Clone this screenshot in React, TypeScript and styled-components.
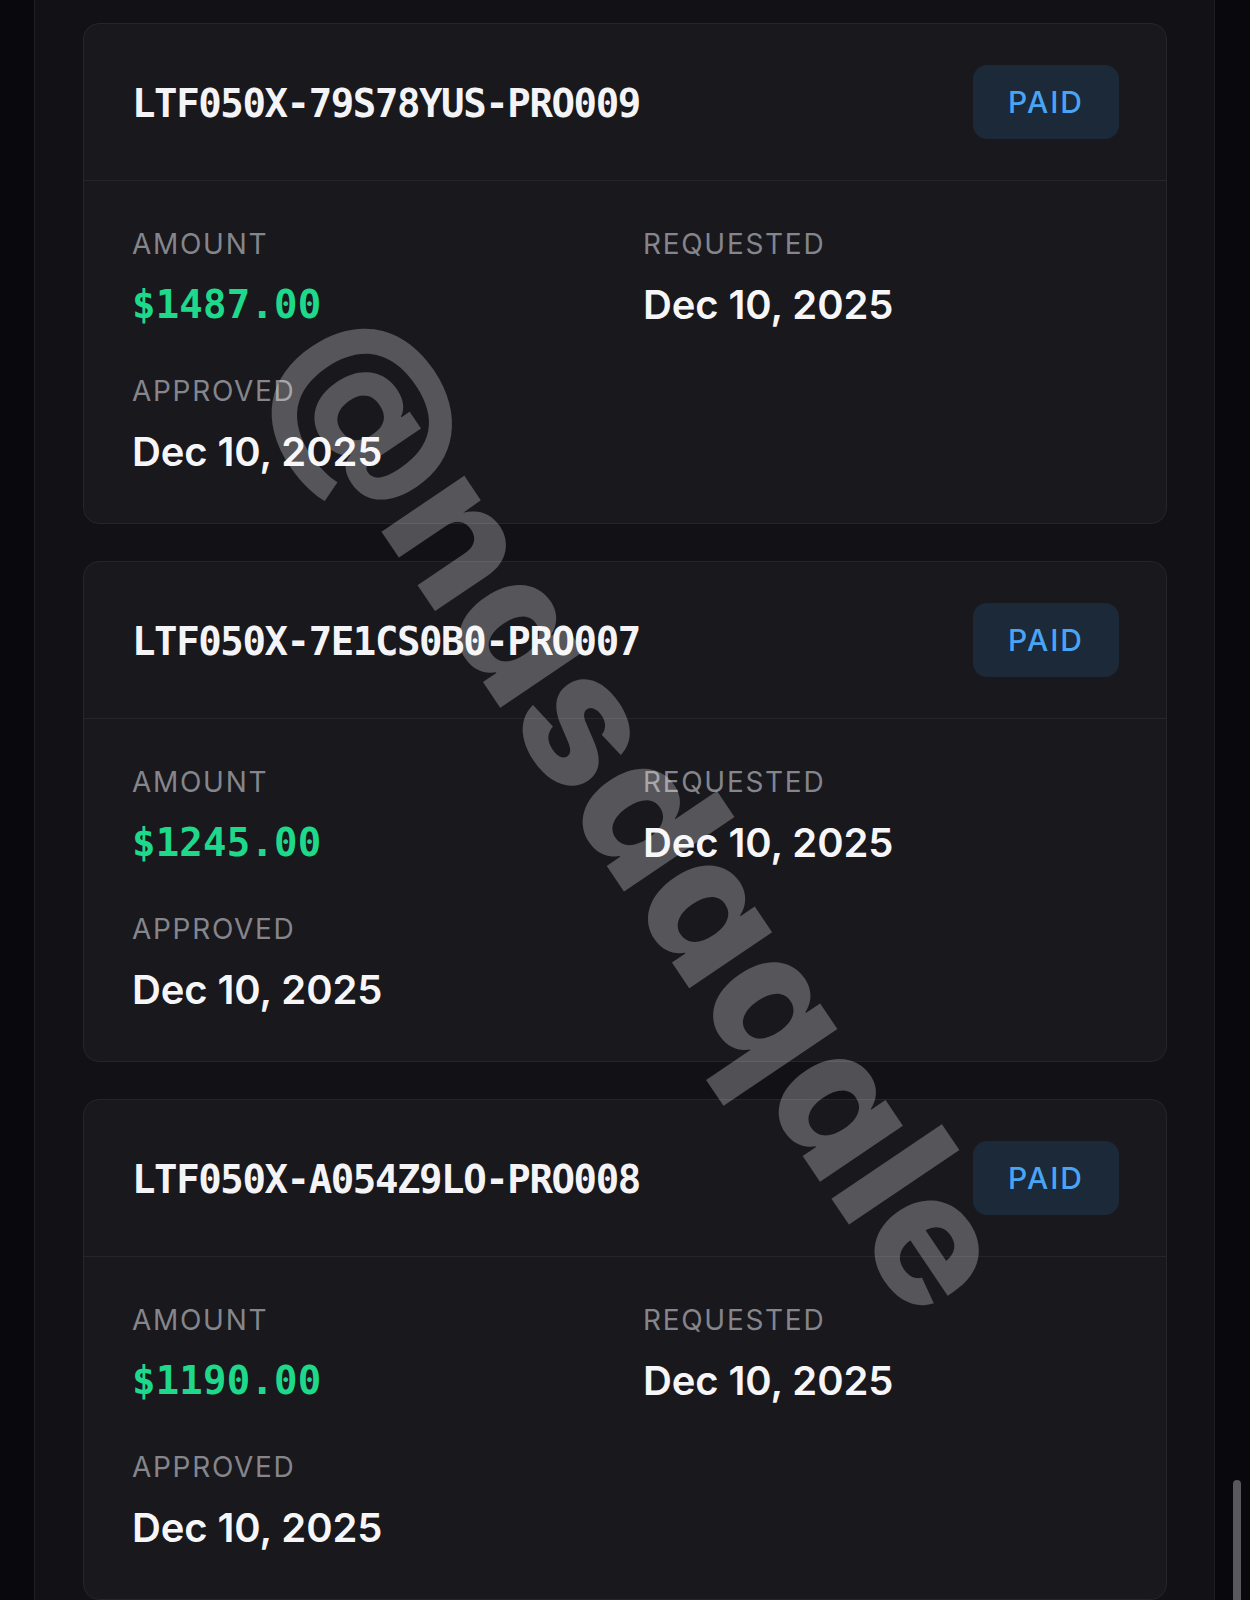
import React from "react";
import styled, { createGlobalStyle } from "styled-components";

const GlobalStyle = createGlobalStyle`
  html, body {
    margin: 0;
    padding: 0;
    background: #09090d;
  }
  * { box-sizing: border-box; }
`;

const Page = styled.div`
  position: relative;
  min-height: 1600px;
  height: 1600px;
  overflow: hidden;
  background: #09090d;
  padding-left: 34px;
  display: flex;
`;

const Panel = styled.div`
  width: 1181px;
  background: #111116;
  border-left: 1px solid #1d1d23;
  border-right: 1px solid #1d1d23;
  padding: 23px 47px 0 48px;
  display: flex;
  flex-direction: column;
  gap: 37px;
`;

const Card = styled.div`
  background: #18181d;
  border: 1px solid #25252b;
  border-radius: 16px;
  overflow: hidden;
`;

const CardHeader = styled.div`
  height: 157px;
  padding: 3px 47px 0 48px;
  display: flex;
  align-items: center;
  justify-content: space-between;
  border-bottom: 1px solid #25252b;
`;

const Title = styled.div`
  font-family: "DejaVu Sans Mono", "Liberation Mono", monospace;
  font-weight: 700;
  font-size: 39px;
  letter-spacing: -1.4px;
  color: #f4f4f6;
  line-height: 48px;
`;

const Badge = styled.div`
  height: 74px;
  width: 146px;
  margin-top: -3px;
  border-radius: 14px;
  background: #1b2939;
  color: #4aa4f4;
  font-family: Inter, "Noto Sans", sans-serif;
  font-weight: 500;
  font-size: 30px;
  letter-spacing: 2px;
  display: flex;
  align-items: center;
  justify-content: center;
`;

const CardBody = styled.div`
  padding: 46px 47px 47px 48px;
  display: grid;
  grid-template-columns: 1fr 1fr;
  column-gap: 35px;
  row-gap: 45px;
`;

const Field = styled.div`
  display: flex;
  flex-direction: column;
  gap: 20px;
`;

const Label = styled.div`
  font-family: Inter, "Noto Sans", sans-serif;
  font-weight: 400;
  font-size: 28px;
  line-height: 34px;
  letter-spacing: 1.7px;
  color: #85858c;
  text-transform: uppercase;
`;

const Value = styled.div<{ $mono?: boolean; $color?: string }>`
  font-family: ${(p) =>
    p.$mono ? `"DejaVu Sans Mono", "Liberation Mono", monospace` : `Inter, "Noto Sans", sans-serif`};
  font-weight: ${(p) => (p.$mono ? 700 : 600)};
  font-size: ${(p) => (p.$mono ? "39px" : "40px")};
  line-height: 48px;
  letter-spacing: ${(p) => (p.$mono ? "0.2px" : "-0.1px")};
  color: ${(p) => p.$color || "#f6f6f8"};
  white-space: nowrap;
`;

const Watermark = styled.div`
  position: absolute;
  left: 648px;
  top: 808px;
  transform: translate(-50%, -50%) rotate(56deg);
  font-family: Inter, "Noto Sans", sans-serif;
  font-feature-settings: "cv11";
  font-weight: 800;
  font-size: 183px;
  line-height: 1;
  color: rgba(255, 255, 255, 0.27);
  white-space: nowrap;
  pointer-events: none;
`;

const ScrollThumb = styled.div`
  position: absolute;
  left: 1233px;
  top: 1480px;
  width: 8px;
  height: 140px;
  border-radius: 4px;
  background: #58585d;
`;

type Payout = {
  id: string;
  amount: string;
  requested: string;
  approved: string;
};

const payouts: Payout[] = [
  { id: "LTF050X-79S78YUS-PRO009", amount: "$1487.00", requested: "Dec 10, 2025", approved: "Dec 10, 2025" },
  { id: "LTF050X-7E1CS0B0-PRO007", amount: "$1245.00", requested: "Dec 10, 2025", approved: "Dec 10, 2025" },
  { id: "LTF050X-A054Z9LO-PRO008", amount: "$1190.00", requested: "Dec 10, 2025", approved: "Dec 10, 2025" },
];

function PayoutCard({ p }: { p: Payout }) {
  return (
    <Card>
      <CardHeader>
        <Title>{p.id}</Title>
        <Badge>PAID</Badge>
      </CardHeader>
      <CardBody>
        <Field>
          <Label>Amount</Label>
          <Value $mono $color="#1fd98b">{p.amount}</Value>
        </Field>
        <Field>
          <Label>Requested</Label>
          <Value>{p.requested}</Value>
        </Field>
        <Field>
          <Label>Approved</Label>
          <Value>{p.approved}</Value>
        </Field>
      </CardBody>
    </Card>
  );
}

export default function App() {
  return (
    <>
      <GlobalStyle />
      <Page>
        <Panel>
          {payouts.map((p) => (
            <PayoutCard key={p.id} p={p} />
          ))}
        </Panel>
        <Watermark>@nasdaqale</Watermark>
        <ScrollThumb />
      </Page>
    </>
  );
}
